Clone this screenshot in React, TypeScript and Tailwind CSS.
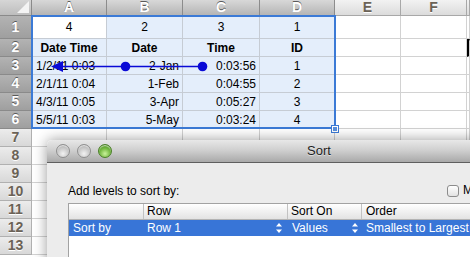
import React from 'react';

const cols = ['A', 'B', 'C', 'D', 'E', 'F', ''];

const rows: { cells: string[]; kind: 'num' | 'head' | 'data' }[] = [
  { cells: ['4', '2', '3', '1'], kind: 'num' },
  { cells: ['Date Time', 'Date', 'Time', 'ID'], kind: 'head' },
  { cells: ['1/2/11 0:03', '2-Jan', '0:03:56', '1'], kind: 'data' },
  { cells: ['2/1/11 0:04', '1-Feb', '0:04:55', '2'], kind: 'data' },
  { cells: ['4/3/11 0:05', '3-Apr', '0:05:27', '3'], kind: 'data' },
  { cells: ['5/5/11 0:03', '5-May', '0:03:24', '4'], kind: 'data' },
];

const embossed = '[text-shadow:0_-1px_0_#5a5a5a] text-white';
const plainHead = 'text-[#6b6256] [text-shadow:0_1px_0_#ffffff]';

function Chevrons() {
  return (
    <svg width="6" height="10" viewBox="0 0 6 10" className="shrink-0">
      <path d="M3 0 L6 3.6 L0 3.6 Z" fill="#ffffff" />
      <path d="M3 10 L6 6.4 L0 6.4 Z" fill="#ffffff" />
    </svg>
  );
}

function Light({ green }: { green?: boolean }) {
  return (
    <div
      className={
        green
          ? 'w-[14px] h-[14px] rounded-full border border-[#4a7f27] bg-[radial-gradient(circle_at_50%_72%,#c9f29a,#6db33a_55%,#3f7d1a)] shadow-[inset_0_1px_1px_rgba(255,255,255,0.7)]'
          : 'w-[14px] h-[14px] rounded-full border border-[#8f8f8f] bg-[radial-gradient(circle_at_50%_72%,#f2f2f2,#c6c6c6_55%,#9d9d9d)] shadow-[inset_0_1px_1px_rgba(255,255,255,0.7)]'
      }
    />
  );
}

function SortDialog() {
  return (
    <div className="absolute left-[47px] top-[140px] w-[544px] h-[130px] rounded-t-[5px] shadow-[0_0_14px_rgba(0,0,0,0.4)] font-['Liberation_Sans',Arial,sans-serif] text-[12px] text-black">
      <div className="h-[23px] rounded-t-[5px] border-b border-[#5f5f5f] bg-gradient-to-b from-[#e8e8e8] via-[#cdcdcd] to-[#a9a9a9] grid grid-cols-[1fr_auto_1fr] items-center">
        <div className="flex items-center gap-[7px] pl-[9px]">
          <Light />
          <Light />
          <Light green />
        </div>
        <div className="text-[13px] text-[#1e1e1e] [text-shadow:0_1px_0_rgba(255,255,255,0.5)]">Sort</div>
        <div />
      </div>
      <div className="bg-[#ececec] h-[107px] pt-[21px] pl-[21px]">
        <div className="flex items-start h-[15px]">
          <div className="w-[379px] leading-[15px]">Add levels to sort by:</div>
          <div className="flex items-center gap-[4px] -mt-[1px]">
            <div className="w-[12px] h-[12px] rounded-[3px] border border-[#8c8c8c] bg-gradient-to-b from-[#ffffff] to-[#e2e2e2]" />
            <span className="leading-[15px]">My list has headers</span>
          </div>
        </div>
        <div className="mt-[4px] bg-white h-[70px] border-t border-l border-[#a2a2a2]">
          <div className="h-[16px] grid grid-cols-[75px_144px_74px_1fr] border-b border-[#b3b3b3] bg-gradient-to-b from-[#ffffff] to-[#e3e3e3] leading-[15px]">
            <div className="border-r border-[#c2c2c2]" />
            <div className="border-r border-[#c2c2c2] pl-[3px]">Row</div>
            <div className="border-r border-[#c2c2c2] pl-[3px]">Sort On</div>
            <div className="pl-[4px]">Order</div>
          </div>
          <div className="h-[16px] grid grid-cols-[75px_144px_74px_1fr] bg-[#3875d7] text-white leading-[16px]">
            <div className="pl-[4px]">Sort by</div>
            <div className="pl-[3px] pr-[6px] flex items-center justify-between">
              <span>Row 1</span>
              <Chevrons />
            </div>
            <div className="pl-[4px] pr-[4px] flex items-center justify-between">
              <span>Values</span>
              <Chevrons />
            </div>
            <div className="pl-[4px] whitespace-nowrap">Smallest to Largest</div>
          </div>
        </div>
      </div>
    </div>
  );
}

export default function App() {
  const totalRows = 13;
  return (
    <div className="relative w-[470px] h-[257px] overflow-hidden bg-white font-['Liberation_Sans',Arial,sans-serif] text-[12px] text-black">
      <div className="grid grid-cols-[32px_75px_76px_77px_75px_66px_66px_1fr] grid-rows-[16px_23px_repeat(13,18px)]">
        {/* corner */}
        <div className="relative border-r border-b border-[#8a8a8a] bg-gradient-to-b from-[#d6d6d6] to-[#bdbdbd]">
          <div className="absolute right-[2px] bottom-[2px] w-0 h-0 border-l-[12px] border-l-transparent border-b-[12px] border-b-[#f4f4f4]" />
        </div>
        {cols.map((c, i) => (
          <div
            key={c + i}
            className={
              i < 4
                ? `border-r border-b border-[#8c8c8c] bg-gradient-to-b from-[#d8d8d8] to-[#b5b5b5] flex items-center justify-center font-bold text-[14px] ${embossed}`
                : `border-r border-b border-[#a8a8a8] bg-gradient-to-b from-[#f2f2f2] to-[#dcdcdc] flex items-center justify-center font-bold text-[14px] ${plainHead}`
            }
          >
            {c}
          </div>
        ))}
        {Array.from({ length: totalRows }).map((_, r) => {
          const sel = r < 6;
          const data = rows[r];
          return (
            <React.Fragment key={r}>
              <div
                className={
                  sel
                    ? `border-r border-b border-[#8a8a8a] bg-gradient-to-b from-[#b3b3b3] to-[#9f9f9f] flex items-center justify-center font-bold text-[14px] ${embossed}`
                    : `border-r border-b border-[#b0b0b0] bg-gradient-to-b from-[#ececec] to-[#d8d8d8] flex items-center justify-center font-bold text-[14px] ${plainHead}`
                }
              >
                {r + 1}
              </div>
              {[0, 1, 2, 3, 4, 5, 6].map((c) => {
                const inSel = sel && c < 4;
                const active = r === 0 && c === 0;
                const text = data && c < 4 ? data.cells[c] : '';
                let align = 'justify-center';
                if (data && data.kind === 'data') {
                  if (c === 0) align = 'justify-start pl-[4px]';
                  else if (c === 1 || c === 2) align = 'justify-end pr-[3px]';
                }
                const g2 = r === 1 && c === 6;
                return (
                  <div
                    key={c}
                    className={[
                      'flex items-center whitespace-nowrap overflow-hidden border-r border-b',
                      inSel ? 'border-[#c6ccd4]' : 'border-[#d2d2d2]',
                      inSel && !active ? 'bg-[#e4eefb]' : 'bg-white',
                      data && data.kind === 'head' ? 'font-bold' : '',
                      data && data.kind === 'num' ? 'items-end pb-[2px]' : '',
                      g2 ? 'border-l-2 border-t-2 border-l-black border-t-black' : '',
                      align,
                    ].join(' ')}
                  >
                    {text}
                  </div>
                );
              })}
            </React.Fragment>
          );
        })}
      </div>

      {/* selection outline and fill handle */}
      <div className="absolute left-[31px] top-[15px] w-[305px] h-[114px] border-2 border-[#3b7ad6] pointer-events-none" />
      <div className="absolute left-[332px] top-[126px] w-[6px] h-[6px] bg-[#5a90dd] border border-white outline outline-1 outline-[#3b7ad6]" />

      {/* trace precedents arrows */}
      <svg className="absolute left-0 top-0 pointer-events-none" width="470" height="257">
        <line x1="60" y1="66.5" x2="202.5" y2="66.5" stroke="#0a0ad6" strokeWidth="1.3" />
        <polygon points="51,66.5 63,61 63,72" fill="#0a0ad6" />
        <circle cx="125.5" cy="66.5" r="4.8" fill="#0a0ad6" />
        <circle cx="202.5" cy="66.5" r="4.8" fill="#0a0ad6" />
      </svg>

      <SortDialog />
    </div>
  );
}
